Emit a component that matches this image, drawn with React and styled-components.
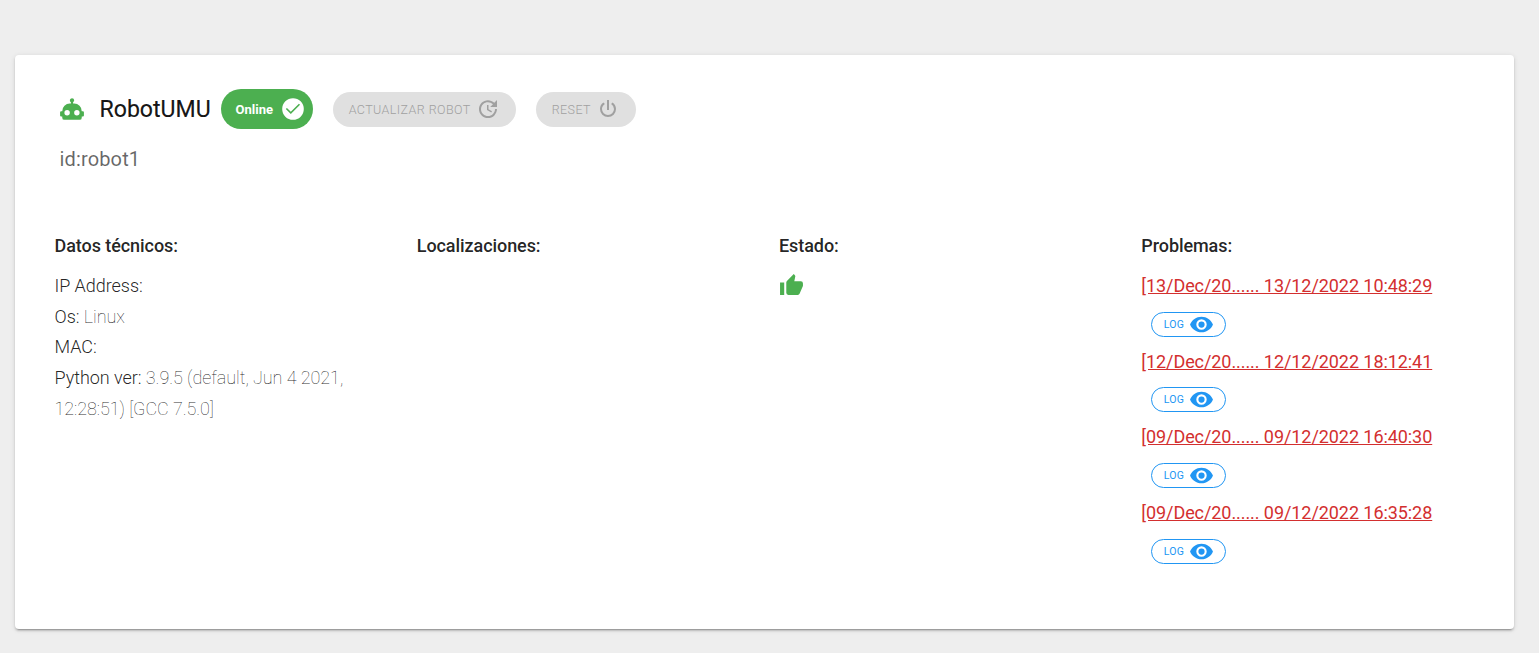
import React from "react";
import styled, { createGlobalStyle } from "styled-components";

const Global = createGlobalStyle`
  body { margin: 0; background: #eeeeee; font-family: Roboto, "Liberation Sans", sans-serif; color: rgba(0,0,0,.87); }
  * { box-sizing: border-box; }
`;

const Card = styled.main`
  margin: 55px 25px 24px 15px;
  height: 574px;
  padding: 34px 40px 0 39.5px;
  background: #fff;
  border-radius: 4px;
  box-shadow: 0 3px 1px -2px rgba(0,0,0,.2), 0 2px 2px 0 rgba(0,0,0,.14), 0 1px 5px 0 rgba(0,0,0,.12);
`;

const Header = styled.header`
  display: flex;
  align-items: center;
  height: 40px;
  padding-left: 4.5px;
`;

const Icon = styled.svg`
  width: ${(p) => p.$size || 24}px;
  height: ${(p) => p.$size || 24}px;
  flex: none;
  display: block;
  fill: ${(p) => p.$color || "currentColor"};
`;

const Title = styled.h1`
  margin: 2px 10px 0 14.5px;
  width: 111.5px;
  font-size: 23.1px;
  line-height: 32px;
  font-weight: 400;
  color: rgba(0,0,0,.92);
  -webkit-text-stroke: .2px rgba(0,0,0,.87);
  white-space: nowrap;
`;

const StatusChip = styled.span`
  display: flex;
  align-items: center;
  justify-content: space-between;
  width: 92px;
  height: 40px;
  padding: 0 8px 0 14.4px;
  border-radius: 20px;
  background: #4caf50;
  color: #fff;
  font-size: 13px;
  font-weight: 700;
  letter-spacing: .05px;
`;

const DisabledButton = styled.button`
  display: flex;
  align-items: center;
  justify-content: space-between;
  width: ${(p) => p.$width}px;
  height: 35px;
  margin-left: 20px;
  padding: 0 16px 0 15.7px;
  border: 0;
  border-radius: 18px;
  background: #e0e0e0;
  color: #a0a0a0;
  font: 300 12.5px Roboto, sans-serif;
  letter-spacing: .42px;
  white-space: nowrap;
`;

const Identifier = styled.p`
  margin: 14px 0 0 5px;
  font-size: 20px;
  line-height: 32px;
  font-weight: 400;
  letter-spacing: .15px;
  color: rgba(0,0,0,.6);
`;

const Columns = styled.div`
  display: grid;
  grid-template-columns: repeat(4, 362.25px);
  margin-top: 55px;
`;

const Heading = styled.h2`
  margin: 0 0 9px;
  font-size: 18px;
  line-height: 31px;
  font-weight: 500;
  letter-spacing: -.07px;
`;

const Details = styled.div`
  width: 310px;
  padding-top: .85px;
`;

const Detail = styled.p`
  margin: 0;
  font-size: 18px;
  line-height: 30.7px;
  font-weight: 300;
  letter-spacing: -.05px;
`;

const Value = styled.span`
  font-weight: 100;
`;

const StatusIcon = styled.div`
  padding-top: 3px;
`;

const Problem = styled.div`
  height: 75.65px;
`;

const ProblemLink = styled.a`
  display: block;
  color: #d32f2f;
  font-size: 18px;
  line-height: 31px;
  letter-spacing: -.07px;
  text-decoration: underline;
  white-space: nowrap;
`;

const LogButton = styled.button`
  display: flex;
  align-items: center;
  justify-content: space-between;
  width: 75px;
  height: 25px;
  margin: 10.6px 0 0 9.6px;
  padding: 0 11px 0 11.8px;
  border: 1px solid #2196f3;
  border-radius: 13px;
  background: transparent;
  color: #2196f3;
  font: 400 10.5px Roboto, sans-serif;
  letter-spacing: .3px;
`;

const paths = {
  robot: "M12 2a2 2 0 0 1 2 2c0 .74-.4 1.39-1 1.73V7h1a7 7 0 0 1 7 7h1a1 1 0 0 1 1 1v3a1 1 0 0 1-1 1h-1v1a2 2 0 0 1-2 2H5a2 2 0 0 1-2-2v-1H2a1 1 0 0 1-1-1v-3a1 1 0 0 1 1-1h1a7 7 0 0 1 7-7h1V5.73A2 2 0 0 1 12 2M7.5 13a2.5 2.5 0 1 0 0 5 2.5 2.5 0 0 0 0-5m9 0a2.5 2.5 0 1 0 0 5 2.5 2.5 0 0 0 0-5z",
  check: "M12 1.2a10.8 10.8 0 1 0 0 21.6 10.8 10.8 0 0 0 0-21.6zM9.8 17.1l-5-5 1.15-1.15L9.8 14.8l8.1-8.1 1.15 1.15z",
  update: "M21 10.12h-6.78l2.74-2.82c-2.73-2.7-7.15-2.8-9.88-.1-2.73 2.71-2.73 7.08 0 9.79s7.15 2.71 9.88 0C18.32 15.65 19 14.08 19 12.1h2c0 1.98-.88 4.55-2.64 6.29-3.51 3.48-9.21 3.48-12.72 0-3.5-3.47-3.53-9.11-.02-12.58s9.14-3.47 12.65 0L21 3v7.12zM12.5 8v4.25l3.5 2.08-.72 1.21L11 13V8h1.5z",
  power: "M16.56 5.44l-1.45 1.45A5.97 5.97 0 0 1 18 12a6 6 0 0 1-12 0c0-2.17 1.16-4.06 2.88-5.12L7.44 5.44A7.96 7.96 0 0 0 4 12a8 8 0 0 0 16 0c0-2.72-1.36-5.12-3.44-6.56M13 3h-2v10h2",
  thumb: "M23 10a2 2 0 0 0-2-2h-6.32l.96-4.57c.02-.1.03-.21.03-.32 0-.41-.17-.79-.44-1.06L14.17 1 7.59 7.58C7.22 7.95 7 8.45 7 9v10a2 2 0 0 0 2 2h9c.83 0 1.54-.5 1.84-1.22l3.02-7.05c.09-.23.14-.47.14-.73v-2M1 21h4V9H1v12z",
  eye: "M12 4.5C7 4.5 2.73 7.61 1 12c1.73 4.39 6 7.5 11 7.5s9.27-3.11 11-7.5c-1.73-4.39-6-7.5-11-7.5zM12 17a5 5 0 1 1 0-10 5 5 0 0 1 0 10zm0-8a3 3 0 1 0 0 6 3 3 0 0 0 0-6z",
};

function Glyph({ name, color, size }) {
  return (
    <Icon viewBox="0 0 24 24" $color={color} $size={size}>
      <path fillRule="evenodd" d={paths[name]} />
    </Icon>
  );
}

const problems = [
  "[13/Dec/20...... 13/12/2022 10:48:29",
  "[12/Dec/20...... 12/12/2022 18:12:41",
  "[09/Dec/20...... 09/12/2022 16:40:30",
  "[09/Dec/20...... 09/12/2022 16:35:28",
];

export default function App() {
  return (
    <>
      <Global />
      <Card>
        <Header>
          <Glyph name="robot" color="#4caf50" size={26} />
          <Title>RobotUMU</Title>
          <StatusChip>Online<Glyph name="check" /></StatusChip>
          <DisabledButton $width={183}>ACTUALIZAR ROBOT<Glyph name="update" /></DisabledButton>
          <DisabledButton $width={100}>RESET<Glyph name="power" /></DisabledButton>
        </Header>
        <Identifier>id:robot1</Identifier>
        <Columns>
          <section>
            <Heading>Datos técnicos:</Heading>
            <Details>
              <Detail>IP Address:</Detail>
              <Detail>Os: <Value>Linux</Value></Detail>
              <Detail>MAC:</Detail>
              <Detail>Python ver: <Value>3.9.5 (default, Jun 4 2021, 12:28:51) [GCC 7.5.0]</Value></Detail>
            </Details>
          </section>
          <section><Heading>Localizaciones:</Heading></section>
          <section>
            <Heading>Estado:</Heading>
            <StatusIcon><Glyph name="thumb" color="#4caf50" size={25} /></StatusIcon>
          </section>
          <section>
            <Heading>Problemas:</Heading>
            {problems.map((text) => (
              <Problem key={text}>
                <ProblemLink>{text}</ProblemLink>
                <LogButton>LOG<Glyph name="eye" size={25} /></LogButton>
              </Problem>
            ))}
          </section>
        </Columns>
      </Card>
    </>
  );
}
